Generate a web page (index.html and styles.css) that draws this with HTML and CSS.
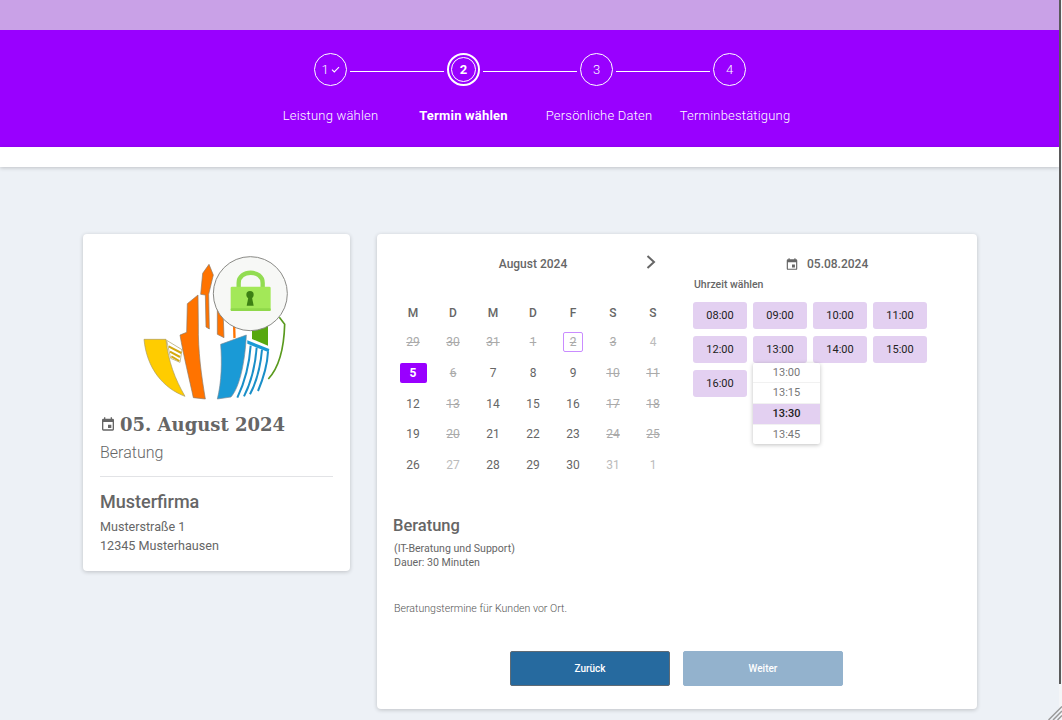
FILE: index.html
```html
<!DOCTYPE html>
<html lang="de">
<head>
  <meta charset="UTF-8">
  <meta name="viewport" content="width=device-width, initial-scale=1.0">
  <title>Terminbuchung</title>
  <link rel="stylesheet" href="styles.css">
</head>
<body>

  <div class="page">
    <div class="topbar"></div>

    <div class="stepper">
      <div class="step-circles">
        <div class="circle">1<svg class="check" viewBox="0 0 10 8"><path d="M1 4.2 L3.6 6.8 L9 1.2" fill="none" stroke="#fff" stroke-width="1.2"/></svg></div>
        <div class="line"></div>
        <div class="circle current"><div class="inner-ring">2</div></div>
        <div class="line"></div>
        <div class="circle">3</div>
        <div class="line"></div>
        <div class="circle">4</div>
      </div>
      <div class="step-labels">
        <div>Leistung wählen</div>
        <div class="current">Termin wählen</div>
        <div>Persönliche Daten</div>
        <div>Terminbestätigung</div>
      </div>
    </div>
    <div class="stepper-foot"></div>

    <div class="content">
      <div class="card summary">
        <div class="logo">
          <svg viewBox="0 0 510 450" width="170" height="150">
            <path d="M42 253 L108 253 C115 320 135 372 165 424 C100 400 50 340 42 253Z" fill="#ffcc00" stroke="#a89a60" stroke-width="2"/>
            <path d="M110 256 L156 284 L150 322 L122 310Z" fill="#fff" stroke="#a89a60" stroke-width="2"/>
            <path d="M116 274 L154 294 M120 290 L150 306 M124 304 L148 318" stroke="#d4a810" stroke-width="6" fill="none"/>
            <path d="M204 120 L172 146 L170 232 L150 240 C160 300 180 380 190 428 L226 432 C214 360 204 290 205 210Z" fill="#ff7300" stroke="#8a7a6a" stroke-width="2"/>
            <path d="M237 28 L218 55 L212 118 L226 120 L228 216 L238 222 L236 118 L250 60Z" fill="#ff7300" stroke="#8a7a6a" stroke-width="2"/>
            <path d="M262 150 L262 238 L282 248 L280 190Z" fill="#ff7300" stroke="#8a7a6a" stroke-width="2"/>
            <path d="M309 214 L310 250 L317 248 L316 214Z" fill="#ff7300"/>
            <path d="M366 200 L414 200 L414 272 L366 252Z" fill="#57a80f"/>
            <path d="M448 187 L464 208 C462 280 445 340 415 372" fill="none" stroke="#5a9a1e" stroke-width="5"/>
            <path d="M272 268 L349 240 C345 320 330 395 303 426 L262 432 C275 380 276 320 272 268Z" fill="#1a9ad6" stroke="#7a8a95" stroke-width="2"/>
            <path d="M352 256 L418 282 L416 292 L352 266Z" fill="#1a9ad6"/>
            <path d="M362 272 C358 330 345 380 322 428 M380 278 C376 330 362 385 342 424 M396 284 C392 330 380 380 360 418 M414 290 C412 330 400 370 384 408" fill="none" stroke="#1a8fc8" stroke-width="6"/>
            <circle cx="361" cy="116" r="111" fill="#f7f8f6" stroke="#8a8a86" stroke-width="3"/>
            <path d="M326 100 L326 84 C326 43 398 43 398 84 L398 100" fill="none" stroke="#92dc52" stroke-width="13"/>
            <rect x="302" y="95" width="120" height="73" rx="4" fill="#a3e858"/>
            <rect x="302" y="160" width="120" height="8" rx="3" fill="#8fd84a"/>
            <circle cx="360" cy="119" r="11" fill="#3d8014"/>
            <path d="M356 122 L350 152 L371 152 L365 122Z" fill="#3d8014"/>
          </svg>
        </div>
        <h2 class="summary-date">
          <svg class="cal-icon" viewBox="0 0 24 24" width="18" height="18"><path d="M19 4h-1V2h-2v2H8V2H6v2H5a2 2 0 0 0-2 2v14a2 2 0 0 0 2 2h14a2 2 0 0 0 2-2V6a2 2 0 0 0-2-2zm0 16H5V9h14v11zm-7-7h5v5h-5z" fill="#666"/></svg>
          <span>05. August 2024</span>
        </h2>
        <div class="summary-service">Beratung</div>
        <hr class="divider">
        <h3 class="company">Musterfirma</h3>
        <div class="address">Musterstraße 1<br>12345 Musterhausen</div>
      </div>

      <div class="card booking">
        <div class="booking-top">
          <div class="calendar">
            <div class="month-head">
              <span class="month-name">August 2024</span>
              <svg class="next" viewBox="0 0 12 16" width="12" height="16"><path d="M2.5 2 L9 8 L2.5 14" fill="none" stroke="#666" stroke-width="2"/></svg>
            </div>
            <div class="weekdays">
              <div>M</div><div>D</div><div>M</div><div>D</div><div>F</div><div>S</div><div>S</div>
            </div>
            <div class="days">
              <div class="off">29</div><div class="off">30</div><div class="off">31</div><div class="off">1</div><div class="off today"><span>2</span></div><div class="off">3</div><div class="muted">4</div>
              <div class="selected"><span>5</span></div><div class="off">6</div><div>7</div><div>8</div><div>9</div><div class="off">10</div><div class="off">11</div>
              <div>12</div><div class="off">13</div><div>14</div><div>15</div><div>16</div><div class="off">17</div><div class="off">18</div>
              <div>19</div><div class="off">20</div><div>21</div><div>22</div><div>23</div><div class="off">24</div><div class="off">25</div>
              <div>26</div><div class="muted">27</div><div>28</div><div>29</div><div>30</div><div class="muted">31</div><div class="muted">1</div>
            </div>
          </div>

          <div class="times">
            <div class="times-date">
              <svg viewBox="0 0 24 24" width="14" height="14"><path d="M19 4h-1V2h-2v2H8V2H6v2H5a2 2 0 0 0-2 2v14a2 2 0 0 0 2 2h14a2 2 0 0 0 2-2V6a2 2 0 0 0-2-2zm0 16H5V9h14v11zm-7-7h5v5h-5z" fill="#666"/></svg>
              <span>05.08.2024</span>
            </div>
            <div class="times-label">Uhrzeit wählen</div>
            <div class="slots">
              <div class="slot">08:00</div>
              <div class="slot">09:00</div>
              <div class="slot">10:00</div>
              <div class="slot">11:00</div>
              <div class="slot">12:00</div>
              <div class="slot has-menu">13:00
                <div class="slot-menu">
                  <div>13:00</div>
                  <div>13:15</div>
                  <div class="active">13:30</div>
                  <div>13:45</div>
                </div>
              </div>
              <div class="slot">14:00</div>
              <div class="slot">15:00</div>
              <div class="slot">16:00</div>
            </div>
          </div>
        </div>

        <h3 class="service-title">Beratung</h3>
        <div class="service-info">(IT-Beratung und Support)<br>Dauer: 30 Minuten</div>
        <div class="service-note">Beratungstermine für Kunden vor Ort.</div>

        <div class="actions">
          <button class="btn">Zurück</button>
          <button class="btn disabled">Weiter</button>
        </div>
      </div>
    </div>
  </div>

  <div class="scroll-track"><div class="scroll-thumb"></div></div>
  <svg class="grip" viewBox="0 0 14 14" width="14" height="14"><path d="M14 0.5 L0.5 14 M14 5 L5 14 M14 9.5 L9.5 14" stroke="#9a9a9a" stroke-width="1.5"/></svg>

</body>
</html>
```

FILE: styles.css
```css
html, body {
  margin: 0;
  padding: 0;
  height: 100%;
  overflow: hidden;
}
body {
  background-color: #edf1f6;
  color: #666;
  font-family: Roboto, "Liberation Sans", sans-serif;
  position: relative;
}
.page {
  width: 1059px;
  height: 720px;
  background-color: #edf1f6;
}
.topbar {
  height: 30px;
  background-color: #c9a1e7;
}

/* Stepper */
.stepper {
  height: 117px;
  background-color: #9900ff;
  color: white;
  box-sizing: border-box;
  padding: 23px 0 0 264px;
}
.stepper-foot {
  height: 20px;
  background-color: white;
  box-shadow: 0 1px 4px rgba(0, 0, 0, 0.2);
}
.step-circles {
  display: flex;
  align-items: center;
  padding-left: 50px;
  height: 33px;
}
.circle {
  width: 33px;
  height: 33px;
  box-sizing: border-box;
  border: 1px solid white;
  border-radius: 50%;
  display: flex;
  align-items: center;
  justify-content: center;
  font-size: 13px;
  font-weight: 300;
}
.circle.current {
  font-weight: 700;
  border-width: 2px;
}
.inner-ring {
  width: 25px;
  height: 25px;
  box-sizing: border-box;
  border: 1px solid white;
  border-radius: 50%;
  display: flex;
  align-items: center;
  justify-content: center;
}
.check {
  width: 9px;
  height: 7px;
  margin-left: 2px;
}
.line {
  width: 94px;
  height: 1px;
  margin: 3px 3px 0;
  background-color: white;
}
.step-labels {
  display: grid;
  grid-template-columns: 133px 133px 138px 134px;
  margin-top: 20px;
  text-align: center;
  font-size: 13px;
  font-weight: 300;
  line-height: 20px;
  letter-spacing: 0.2px;
}
.step-labels .current {
  font-weight: 700;
}

/* Cards */
.content {
  display: flex;
  align-items: flex-start;
  gap: 27px;
  padding: 67px 0 0 83px;
}
.card {
  background-color: white;
  border-radius: 4px;
  box-shadow: 0 1px 4px rgba(0, 0, 0, 0.2);
  box-sizing: border-box;
}

/* Left summary card */
.summary {
  width: 267px;
  height: 337px;
  padding: 21px 17px 0;
}
.logo {
  height: 150px;
  margin-left: 30px;
}
.logo svg {
  display: block;
}
.summary-date {
  display: flex;
  align-items: center;
  gap: 4px;
  margin: 6px 0 0;
  height: 26px;
  font-family: "DejaVu Serif", serif;
  font-size: 18px;
  font-weight: 700;
}
.cal-icon {
  flex: none;
  width: 16px;
  height: 16px;
}
.summary-service {
  margin-top: 6px;
  font-size: 16px;
  font-weight: 300;
  line-height: 20px;
}
.divider {
  border: 0;
  border-top: 1px solid #e2e3e6;
  margin: 13px 0 0;
}
.company {
  margin: 14px 0 0;
  font-size: 18px;
  font-weight: 500;
  line-height: 22px;
}
.address {
  margin-top: 4px;
  font-size: 12.6px;
  line-height: 19px;
}

/* Right booking card */
.booking {
  width: 600px;
  height: 475px;
  padding: 0 16px;
}
.booking-top {
  display: flex;
  height: 262px;
}
.calendar {
  width: 280px;
  flex: none;
}
.month-head {
  height: 30px;
  padding-top: 15px;
  display: flex;
  align-items: center;
  justify-content: center;
  position: relative;
  font-size: 12px;
  font-weight: 500;
}
.next {
  position: absolute;
  right: 16px;
  top: 20px;
}
.weekdays, .days {
  display: grid;
  grid-template-columns: repeat(7, 40px);
  text-align: center;
  font-size: 12px;
}
.weekdays {
  margin-top: 26px;
  font-weight: 500;
  line-height: 16px;
}
.days {
  margin-top: 6px;
  grid-auto-rows: 30.75px;
  line-height: 30.75px;
  font-weight: 400;
}
.days .off {
  color: #aaa;
  text-decoration: line-through;
}
.days .muted {
  color: #bbb;
}
.days .today, .days .selected {
  display: flex;
  align-items: center;
  justify-content: center;
}
.days .today span {
  width: 20px;
  height: 20px;
  line-height: 18px;
  box-sizing: border-box;
  border: 1px solid #c98cff;
  border-radius: 2px;
}
.days .selected span {
  width: 27px;
  height: 20px;
  line-height: 20px;
  border-radius: 2px;
  background-color: #9900ff;
  color: white;
  font-weight: 700;
}

.times {
  margin-left: 20px;
  flex: 1;
}
.times-date {
  height: 45px;
  box-sizing: border-box;
  padding: 15px 0 0 92px;
  display: flex;
  align-items: center;
  gap: 8px;
  font-size: 12px;
  font-weight: 500;
}
.times-label {
  font-size: 10.5px;
  font-weight: 500;
  line-height: 14px;
  margin-top: -1px;
  padding-left: 1px;
}
.slots {
  display: grid;
  grid-template-columns: repeat(4, 54px);
  grid-auto-rows: 27px;
  gap: 6.75px 6px;
  margin-top: 10px;
}
.slot {
  background-color: #e3d0f1;
  border-radius: 3px;
  color: #222;
  font-size: 11px;
  text-align: center;
  line-height: 27px;
  position: relative;
}
.slot-menu {
  position: absolute;
  left: 0;
  top: 27px;
  width: 67px;
  z-index: 2;
  background-color: white;
  border-radius: 2px;
  box-shadow: 0 1px 4px rgba(0, 0, 0, 0.25);
  color: #777;
  line-height: 19.6px;
}
.slot-menu div {
  border-bottom: 1px solid #f1f1f1;
}
.slot-menu div:last-child {
  border-bottom: 0;
}
.slot-menu .active {
  background-color: #e3d0f1;
  color: #222;
  font-weight: 500;
}

.service-title {
  margin: 20px 0 0;
  font-size: 16.5px;
  font-weight: 500;
  line-height: 20px;
}
.service-info {
  margin-top: 6px;
  padding-left: 1px;
  font-size: 10.6px;
  line-height: 14px;
}
.service-note {
  margin-top: 32px;
  padding-left: 1px;
  color: #555;
  font-size: 10.6px;
  font-weight: 300;
  line-height: 14px;
}
.actions {
  display: flex;
  gap: 13px;
  margin-top: 35px;
  padding-left: 117px;
}
.btn {
  width: 160px;
  height: 35px;
  padding: 0;
  border: 1px solid #5f6b75;
  border-radius: 2px;
  background-color: #266a9f;
  color: white;
  font-family: Roboto, "Liberation Sans", sans-serif;
  font-size: 10px;
  font-weight: 500;
}
.btn.disabled {
  border-color: #93b2cd;
  background-color: #93b2cd;
}

/* Scrollbar and window corner */
.scroll-track {
  position: absolute;
  left: 1059px;
  top: 0;
  width: 3px;
  height: 720px;
  background-color: #f4f5f7;
}
.scroll-thumb {
  width: 2px;
  height: 684px;
  background-color: #5a5a5a;
}
.grip {
  position: absolute;
  right: 0;
  bottom: 0;
}
```
